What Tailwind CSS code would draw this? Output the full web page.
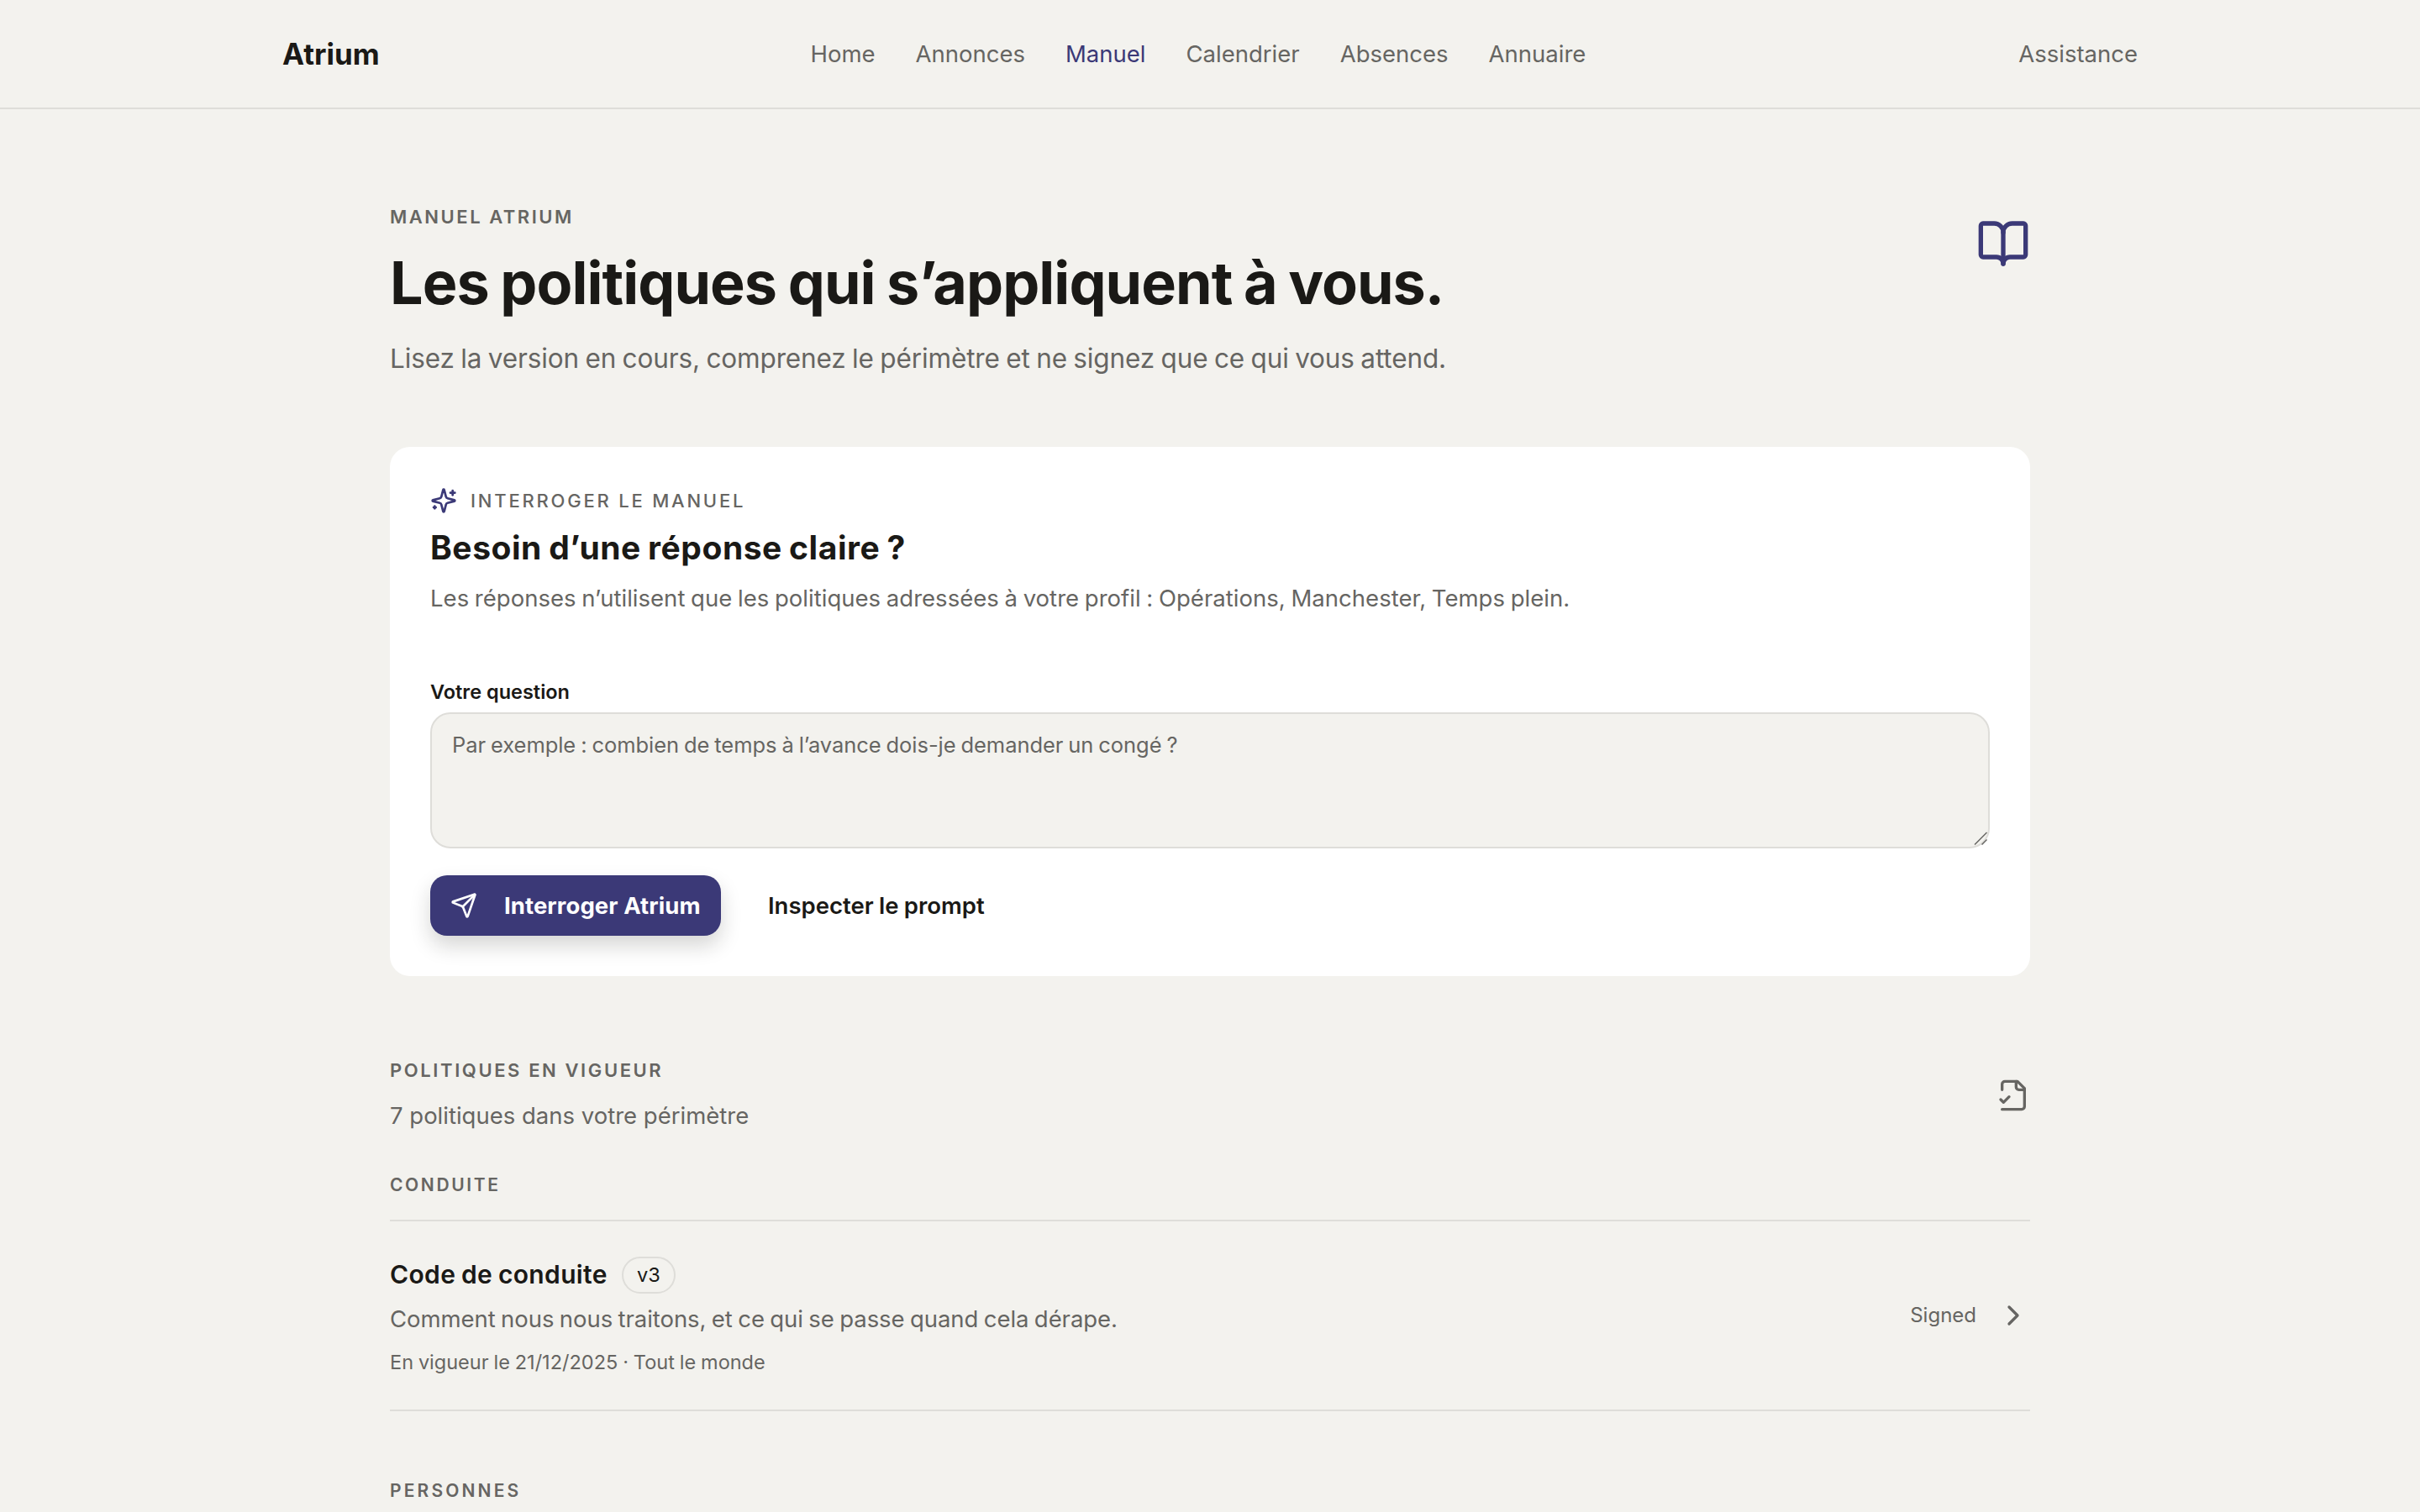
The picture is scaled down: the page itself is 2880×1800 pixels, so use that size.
<!DOCTYPE html>
<html lang="fr">
<head>
    <meta charset="UTF-8">
    <meta name="viewport" content="width=device-width, initial-scale=1.0">
    <title>Manuel - Atrium</title>
    <script src="https://cdn.jsdelivr.net/npm/@tailwindcss/browser@4"></script>
</head>
<body class="h-screen overflow-hidden bg-[#f3f2ee] text-[#1a1916] font-[Inter,sans-serif] antialiased">

    <header class="h-[130px] border-b-2 border-[#deddd9]">
        <div class="mx-auto flex h-full w-[2208px] items-center justify-between">
            <a href="#" class="w-[628.5px] text-[35px] font-bold leading-none">Atrium</a>
            <nav class="flex flex-1 gap-12 pt-0.5 text-[27.5px] text-[#666562]">
                <a href="#">Home</a>
                <a href="#">Annonces</a>
                <a href="#" class="text-[#3b3977]">Manuel</a>
                <a href="#">Calendrier</a>
                <a href="#">Absences</a>
                <a href="#">Annuaire</a>
            </nav>
            <a href="#" class="pt-0.5 text-[27.5px] text-[#666562]">Assistance</a>
        </div>
    </header>

    <main class="mx-auto w-[1952px]">

        <div class="flex items-start justify-between pt-[112px]">
            <div>
                <p class="text-[22px] font-semibold leading-8 tracking-[0.115em] text-[#666562]">MANUEL ATRIUM</p>
                <h1 class="mt-[23px] text-[70px] font-bold leading-[80px] tracking-[-0.0133em] [word-spacing:-0.03em]">Les politiques qui s’appliquent à vous.</h1>
                <p class="mt-6 text-[31.5px] leading-[52px] tracking-[-0.004em] text-[#666562] [word-spacing:-0.04em]">Lisez la version en cours, comprenez le périmètre et ne signez que ce qui vous attend.</p>
            </div>
            <svg class="mt-4 size-16 text-[#3b3977]" viewBox="0 0 24 24" fill="none" stroke="currentColor" stroke-width="2" stroke-linecap="round" stroke-linejoin="round">
                <path d="M12 7v14" />
                <path d="M3 18a1 1 0 0 1-1-1V4a1 1 0 0 1 1-1h5a4 4 0 0 1 4 4 4 4 0 0 1 4-4h5a1 1 0 0 1 1 1v13a1 1 0 0 1-1 1h-6a3 3 0 0 0-3 3 3 3 0 0 0-3-3z" />
            </svg>
        </div>

        <section class="mt-[79px] h-[630px] rounded-3xl bg-white p-12">
            <div class="flex items-center gap-4">
                <svg class="size-8 text-[#3b3977]" viewBox="0 0 24 24" fill="none" stroke="currentColor" stroke-width="2" stroke-linecap="round" stroke-linejoin="round">
                    <path d="M9.937 15.5A2 2 0 0 0 8.5 14.063l-6.135-1.582a.5.5 0 0 1 0-.962L8.5 9.936A2 2 0 0 0 9.937 8.5l1.582-6.135a.5.5 0 0 1 .963 0L14.063 8.5A2 2 0 0 0 15.5 9.937l6.135 1.581a.5.5 0 0 1 0 .964L15.5 14.063a2 2 0 0 0-1.437 1.437l-1.582 6.135a.5.5 0 0 1-.963 0z" />
                    <path d="M20 3v4" />
                    <path d="M22 5h-4" />
                    <path d="M4 17v2" />
                    <path d="M5 18H3" />
                </svg>
                <p class="text-[22px] font-medium leading-8 tracking-[0.127em] text-[#666562]">INTERROGER LE MANUEL</p>
            </div>
            <h2 class="mt-3.5 text-[39px] font-bold leading-[52px] tracking-[0.014em] [word-spacing:-0.04em]">Besoin d’une réponse claire ?</h2>
            <p class="mt-3 text-[27.5px] leading-11 tracking-[0.001em] text-[#666562] [word-spacing:-0.04em]">Les réponses n’utilisent que les politiques adressées à votre profil : Opérations, Manchester, Temps plein.</p>
            <label for="question" class="mt-[74px] block text-[23.5px] font-semibold leading-8">Votre question</label>
            <div class="relative mt-2">
                <textarea id="question" class="block h-[162px] w-full resize-none rounded-3xl border-2 border-[#deddd9] bg-[#f3f2ee] px-6 py-[17px] text-[25.5px] leading-10 tracking-[-0.002em] [word-spacing:-0.045em] placeholder:text-[#666562]" placeholder="Par exemple : combien de temps à l’avance dois-je demander un congé ?"></textarea>
                <!-- resize grip -->
                <svg class="absolute right-[3px] bottom-1 size-4 text-[#666562]" viewBox="0 0 16 16" fill="none" stroke="currentColor" stroke-width="1.5">
                    <path d="M1 15.5 15.5 1" />
                    <path d="M9.5 15.5 15.5 9.5" />
                </svg>
            </div>
            <div class="mt-8 flex gap-4">
                <button class="flex h-[72px] w-[346px] items-center gap-8 rounded-[20px] bg-[#3b3977] px-6 text-[27.5px] font-bold text-white shadow-[0_12px_24px_rgba(26,25,22,0.18)]">
                    <svg class="size-8 shrink-0" viewBox="0 0 24 24" fill="none" stroke="currentColor" stroke-width="2" stroke-linecap="round" stroke-linejoin="round">
                        <path d="M14.536 21.686a.5.5 0 0 0 .937-.024l6.5-19a.496.496 0 0 0-.635-.635l-19 6.5a.5.5 0 0 0-.024.937l7.93 3.18a2 2 0 0 1 1.112 1.11z" />
                        <path d="m21.854 2.147-10.94 10.939" />
                    </svg>
                    <span class="whitespace-nowrap pt-0.5 tracking-[0.003em]">Interroger Atrium</span>
                </button>
                <button class="h-[72px] px-10 pt-0.5 text-[27.5px] font-semibold [word-spacing:-0.02em]">Inspecter le prompt</button>
            </div>
        </section>

        <div class="mt-24 flex items-center justify-between">
            <div>
                <p class="text-[22px] font-semibold leading-8 tracking-[0.118em] text-[#666562]">POLITIQUES EN VIGUEUR</p>
                <p class="mt-4 text-[27.5px] leading-11 text-[#666562]">7 politiques dans votre périmètre</p>
            </div>
            <svg class="size-10 text-[#666562]" viewBox="0 0 24 24" fill="none" stroke="currentColor" stroke-width="2" stroke-linecap="round" stroke-linejoin="round">
                <path d="M4 22h14a2 2 0 0 0 2-2V7l-5-5H6a2 2 0 0 0-2 2v4" />
                <path d="M14 2v4a2 2 0 0 0 2 2h4" />
                <path d="m3 15 2 2 4-4" />
            </svg>
        </div>

        <section class="mt-[47px]">
            <h3 class="text-[21px] font-semibold leading-7 tracking-[0.125em] text-[#666562]">CONDUITE</h3>
            <a href="#" class="mt-[27px] flex h-[228px] items-center justify-between border-y-2 border-[#deddd9]">
                <div>
                    <div class="flex items-center gap-[17px]">
                        <h4 class="pb-0.5 text-[30px] font-semibold leading-10 tracking-[0.012em] [word-spacing:-0.04em]">Code de conduite</h4>
                        <span class="flex h-11 w-16 items-center justify-center rounded-full border-2 border-[#deddd9] text-[23.5px]">v3</span>
                    </div>
                    <p class="mt-2 text-[27.5px] leading-11 tracking-[-0.002em] text-[#666562] [word-spacing:-0.045em]">Comment nous nous traitons, et ce qui se passe quand cela dérape.</p>
                    <p class="mt-[15px] text-[23.5px] leading-[29px] text-[#666562] [word-spacing:-0.03em]">En vigueur le 21/12/2025 · Tout le monde</p>
                </div>
                <div class="flex items-center gap-6 text-[#666562]">
                    <span class="text-2xl">Signed</span>
                    <svg class="size-10" viewBox="0 0 24 24" fill="none" stroke="currentColor" stroke-width="2" stroke-linecap="round" stroke-linejoin="round">
                        <path d="m9 18 6-6-6-6" />
                    </svg>
                </div>
            </a>
        </section>

        <section class="mt-[81px]">
            <h3 class="text-[21px] font-semibold leading-7 tracking-[0.15em] text-[#666562]">PERSONNES</h3>
        </section>
    </main>
</body>
</html>
